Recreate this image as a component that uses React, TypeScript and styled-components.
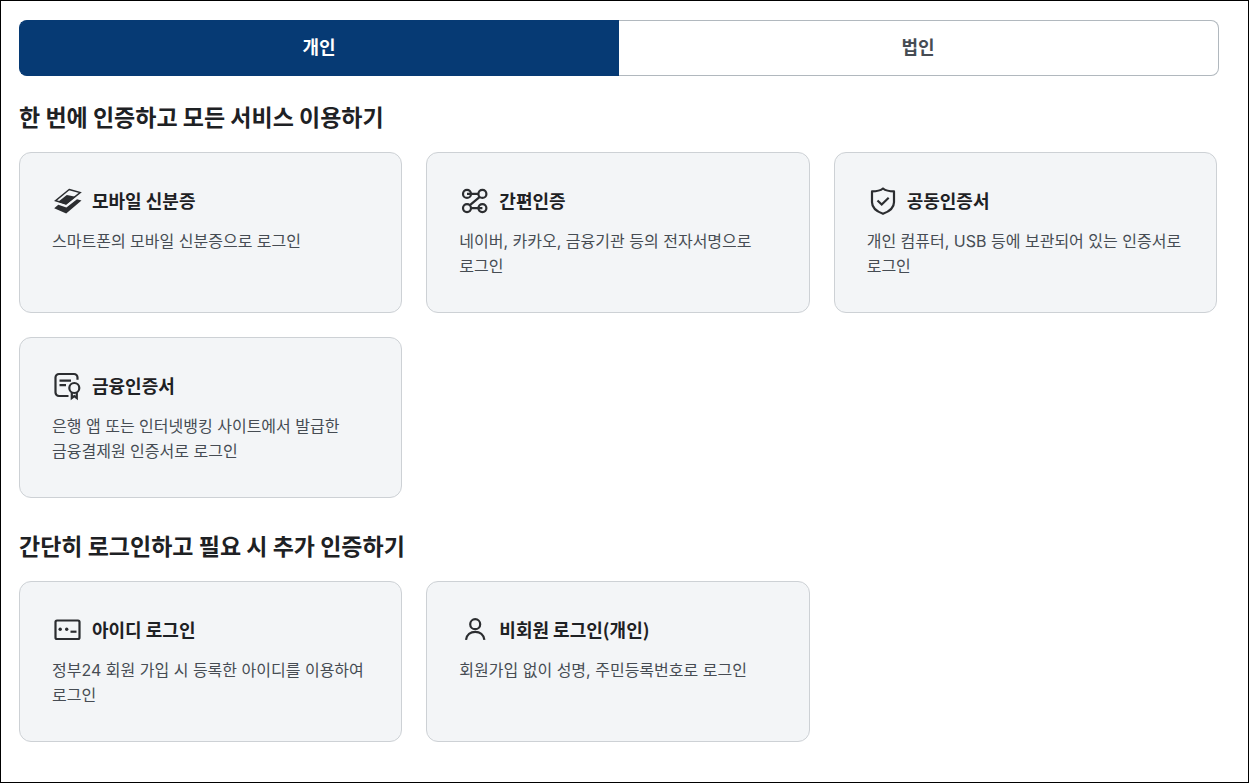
import React, { useState } from "react";
import styled, { createGlobalStyle } from "styled-components";

const GlobalStyle = createGlobalStyle`
  * { box-sizing: border-box; }
  body {
    margin: 0;
    background: #fff;
    color: #1e2124;
    font-family: "Noto Sans CJK KR", "Noto Sans", sans-serif;
    word-break: keep-all;
  }
`;

const Page = styled.main`
  min-height: 100vh;
  padding: 19px 29px 40px 18px;
  border: 1px solid #000;
`;

const TabList = styled.div`
  display: flex;
`;

const Tab = styled.button<{ $active: boolean }>`
  flex: 1;
  height: 56px;
  padding: 0 1px 4px 0;
  border: 1px solid ${(p) => (p.$active ? "#063a74" : "#b1b8be")};
  background: ${(p) => (p.$active ? "#063a74" : "#fff")};
  color: ${(p) => (p.$active ? "#fff" : "#464c53")};
  font-family: inherit;
  font-size: 18px;
  font-weight: 700;
  line-height: 24px;
  cursor: pointer;

  &:first-child {
    border-right: 0;
    border-radius: 8px 0 0 8px;
  }
  &:last-child {
    border-left: 0;
    border-radius: 0 8px 8px 0;
  }
`;

const Panel = styled.div`
  display: flex;
  flex-direction: column;
  gap: 31px;
  margin-top: 24px;
  padding-right: 2px;
`;

const SectionTitle = styled.h2`
  margin: 0 0 20px;
  font-size: 23px;
  font-weight: 700;
  line-height: 32px;
`;

const CardGrid = styled.ul`
  display: grid;
  grid-template-columns: repeat(3, minmax(0, 1fr));
  gap: 24px;
  margin: 0;
  padding: 0;
  list-style: none;
`;

const Card = styled.a`
  display: block;
  height: 100%;
  padding: 32px 32px 33px;
  border: 1px solid #cdd1d5;
  border-radius: 12px;
  background: #f3f5f7;
  color: inherit;
  text-decoration: none;
`;

const CardHead = styled.span`
  display: flex;
  align-items: flex-start;
  gap: 8px;
`;

const CardTitle = styled.strong`
  font-size: 18px;
  font-weight: 700;
  line-height: 30px;
`;

const CardText = styled.span`
  display: block;
  margin-top: 12px;
  color: #464c53;
  font-family: Inter, "Noto Sans CJK KR", sans-serif;
  font-size: 16px;
  line-height: 25px;
`;

const Icon = styled.svg`
  flex: none;
  width: 32px;
  height: 32px;
  fill: none;
  stroke: #2b2d30;
  stroke-width: 2.2;

  .thin {
    stroke-width: 1.5;
  }
  .solid {
    fill: #2b2d30;
    stroke: none;
  }
`;

const icons = {
  mobile: (
    <>
      <path className="thin" d="M17.2 4.5 28.2 7.6 14 18.8 3.6 15.7Z" />
      <path className="solid" d="M14.8 9.9 23.6 11.7 14 19.4 6.2 16.8Z" />
      <path className="solid" d="M6.3 19.8 14.4 22.5 25 14.2 29.5 15.4 14.2 28.4 2.2 23.2Z" />
    </>
  ),
  simple: (
    <>
      <circle cx="8" cy="8.9" r="4" />
      <circle cx="23.4" cy="8.9" r="4" />
      <circle cx="8" cy="23.1" r="4" />
      <circle cx="23.4" cy="23.1" r="4" />
      <path d="M8 8.9h11.6M12 23.1h11.4M20.8 11.8 10.6 20.3" />
    </>
  ),
  joint: (
    <>
      <path
        d="M16 3.5c2.5 2 6.5 2.9 11 2.9v10.8c0 5.3-4.6 9.2-11 11.6C9.6 26.4 5 22.5 5 17.2V6.4c4.5 0 8.500-.9 11-2.9Z"
        strokeLinejoin="round"
      />
      <path d="m10.5 15.5 4.200 4 7-6.700" />
    </>
  ),
  finance: (
    <>
      <path d="M16.5 26H7a3.5 3.5 0 0 1-3.5-3.5v-15A3.5 3.5 0 0 1 7 4h15a3.5 3.5 0 0 1 3.5 3.5v2.2" />
      <path d="M7.5 10.7H19M7.5 15.2H14" />
      <circle cx="22.3" cy="18" r="5" />
      <path d="M19.8 22.5V28l2.5-1.8 2.5 1.8v-5.5" />
    </>
  ),
  id: (
    <>
      <rect x="3.5" y="6.5" width="24" height="18.5" rx="1.5" />
      <circle className="solid" cx="8.2" cy="15.2" r="1.7" />
      <circle className="solid" cx="14.7" cy="15.2" r="1.7" />
      <path d="M18.5 17.7h6" />
    </>
  ),
  person: (
    <>
      <circle cx="16.2" cy="10.2" r="5" />
      <path d="M7 25.8c.7-5 4.500-8 9.200-8s8.500 3 9.200 8" />
    </>
  ),
};

type Method = { icon: keyof typeof icons; title: string; text: string };

const sections: { title: string; methods: Method[] }[] = [
  {
    title: "한 번에 인증하고 모든 서비스 이용하기",
    methods: [
      { icon: "mobile", title: "모바일 신분증", text: "스마트폰의 모바일 신분증으로 로그인" },
      { icon: "simple", title: "간편인증", text: "네이버, 카카오, 금융기관 등의 전자서명으로 로그인" },
      { icon: "joint", title: "공동인증서", text: "개인 컴퓨터, USB 등에 보관되어 있는 인증서로 로그인" },
      { icon: "finance", title: "금융인증서", text: "은행 앱 또는 인터넷뱅킹 사이트에서 발급한 금융결제원 인증서로 로그인" },
    ],
  },
  {
    title: "간단히 로그인하고 필요 시 추가 인증하기",
    methods: [
      { icon: "id", title: "아이디 로그인", text: "정부24 회원 가입 시 등록한 아이디를 이용하여 로그인" },
      { icon: "person", title: "비회원 로그인(개인)", text: "회원가입 없이 성명, 주민등록번호로 로그인" },
    ],
  },
];

const tabs = ["개인", "법인"];

export default function App() {
  const [active, setActive] = useState(0);
  return (
    <>
      <GlobalStyle />
      <Page>
        <TabList role="tablist">
          {tabs.map((label, i) => (
            <Tab
              key={label}
              type="button"
              role="tab"
              aria-selected={active === i}
              $active={active === i}
              onClick={() => setActive(i)}
            >
              {label}
            </Tab>
          ))}
        </TabList>
        <Panel role="tabpanel">
          {sections.map((section) => (
            <section key={section.title}>
              <SectionTitle>{section.title}</SectionTitle>
              <CardGrid>
                {section.methods.map((m) => (
                  <li key={m.title}>
                    <Card href="#">
                      <CardHead>
                        <Icon viewBox="0 0 32 32" aria-hidden="true">
                          {icons[m.icon]}
                        </Icon>
                        <CardTitle>{m.title}</CardTitle>
                      </CardHead>
                      <CardText>{m.text}</CardText>
                    </Card>
                  </li>
                ))}
              </CardGrid>
            </section>
          ))}
        </Panel>
      </Page>
    </>
  );
}
